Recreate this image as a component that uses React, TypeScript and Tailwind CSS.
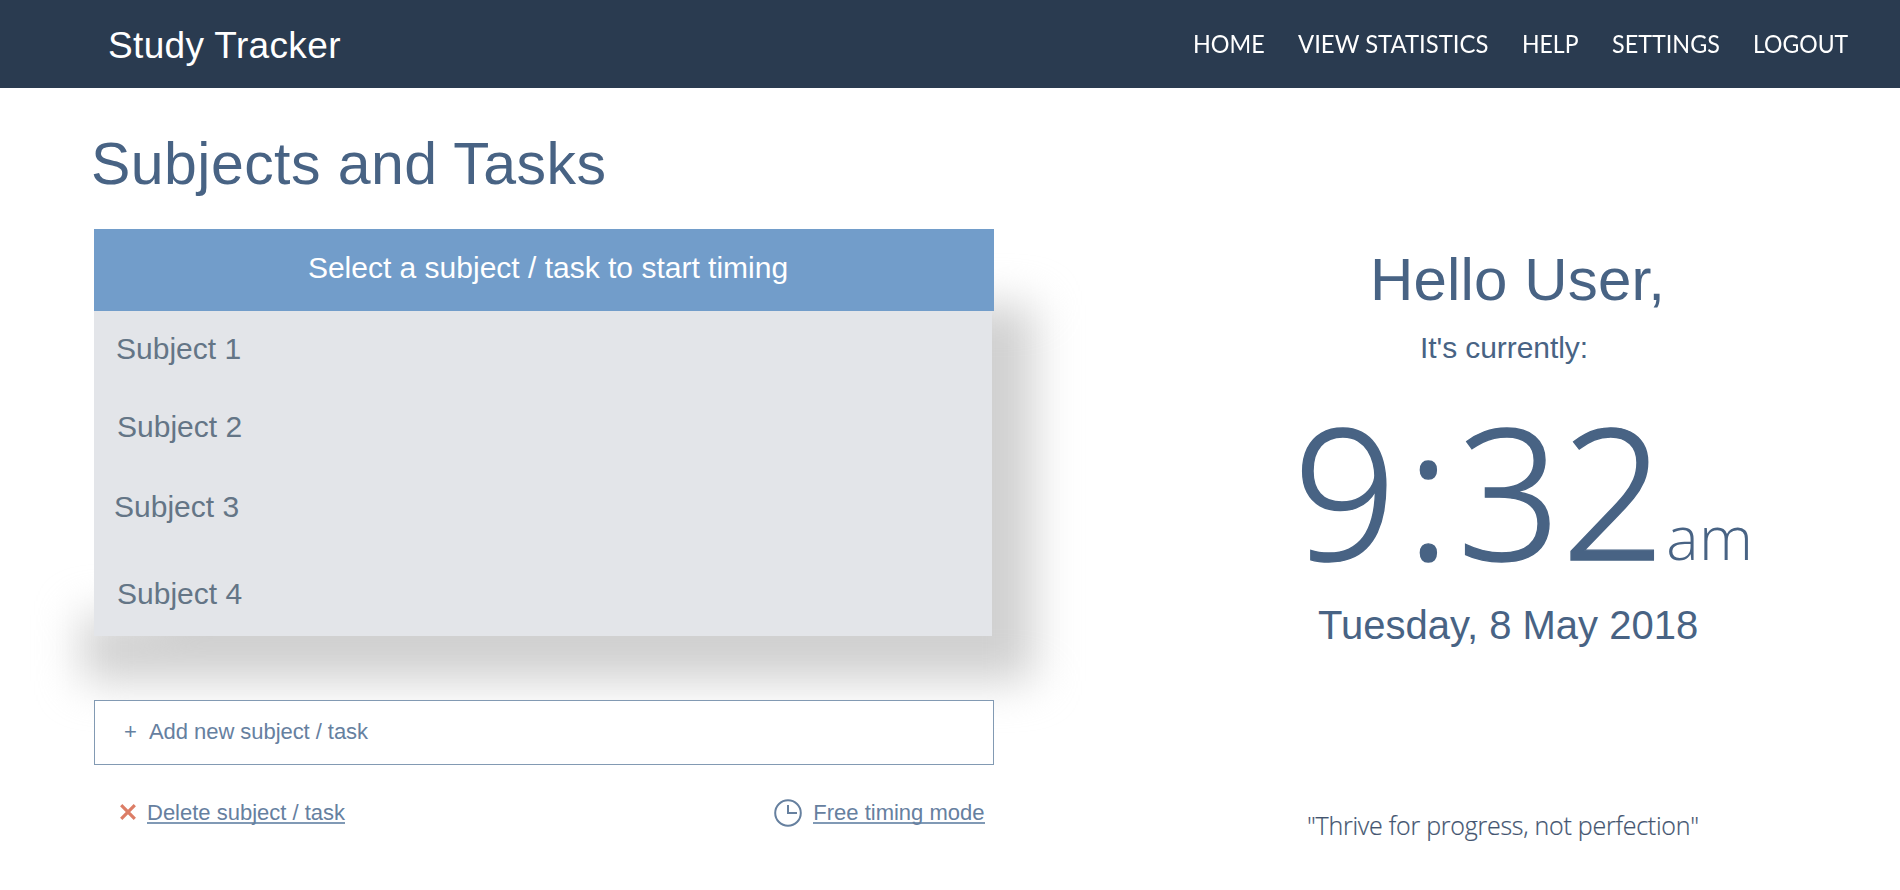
import type { ReactNode } from "react";

type Item = { label: string; className: string; textClassName?: string };

const NAV: Item[] = [
  { label: "HOME", className: "w-[105px]", textClassName: "scale-x-[0.935]" },
  { label: "VIEW STATISTICS", className: "w-[223.5px]", textClassName: "scale-x-[0.955]" },
  { label: "HELP", className: "w-[90px]", textClassName: "scale-x-[0.92]" },
  { label: "SETTINGS", className: "w-[141.5px]", textClassName: "scale-x-[0.935]" },
  { label: "LOGOUT", className: "w-[95px]", textClassName: "scale-x-[0.92]" },
];

const SUBJECTS: Item[] = [
  { label: "Subject 1", className: "h-[75px] pl-[22px]" },
  { label: "Subject 2", className: "h-[81px] pl-[23px]" },
  { label: "Subject 3", className: "h-[78px] pl-[20px]" },
  { label: "Subject 4", className: "h-[91px] pl-[23px] pt-1.5" },
];

function Header() {
  return (
    <header className="flex h-[88px] items-center justify-between bg-[#2a3b50] text-white">
      <div className="pt-[3px] pl-[108px] text-[37px] tracking-[0.35px]">Study Tracker</div>
      <nav className="flex pr-[52px] pb-px font-['Lato',sans-serif] text-[25px] whitespace-nowrap">
        {NAV.map((item) => (
          <a key={item.label} className={item.className}>
            <span className={`inline-block origin-left ${item.textClassName}`}>{item.label}</span>
          </a>
        ))}
      </nav>
    </header>
  );
}

function PanelShadow() {
  return (
    <div className="absolute inset-0 blur-[22px]">
      <div className="absolute top-[76px] -left-[12px] h-[376px] w-[952px] bg-[#d0d0d0] [clip-path:polygon(80px_0,100%_0,100%_100%,0_100%,0_310px,80px_310px)]" />
    </div>
  );
}

function SubjectPanel() {
  return (
    <section className="relative mt-[33px] h-[407px] w-[900px]">
      <PanelShadow />
      <div className="relative flex h-[82px] items-center justify-center bg-[#729dca] pb-1.5 pl-2 text-[30px] text-white">
        Select a subject / task to start timing
      </div>
      <ul className="relative mr-[2px] h-[325px] bg-[#e3e5e9] text-[30px] text-[#647586]">
        {SUBJECTS.map((s) => (
          <li key={s.label} className={`flex items-center ${s.className}`}>
            {s.label}
          </li>
        ))}
      </ul>
    </section>
  );
}

function ActionLink({ children }: { children: ReactNode }) {
  return <a className="border-b-2 border-[#8099b5] pt-px leading-[18px]">{children}</a>;
}

function Actions() {
  return (
    <>
      <div className="relative mt-16 flex h-[65px] w-[900px] items-center border-[1.5px] border-[#829ab3] bg-white pb-[3px] pl-[29px] text-[22px] tracking-[-0.05px] text-[#66809f]">
        <span className="w-[25px]">+</span>
        <span>Add new subject / task</span>
      </div>
      <div className="mt-8 flex h-8 w-[900px] items-center text-[22px] text-[#66809f]">
        <svg className="mb-0.5 ml-[26px] h-4 w-4" viewBox="0 0 16 16" fill="none" stroke="#dc7d66" strokeWidth="3.2">
          <path d="M1.2 1.2 14.8 14.8M14.8 1.2 1.2 14.8" />
        </svg>
        <div className="ml-[11px] flex">
          <ActionLink>Delete subject / task</ActionLink>
        </div>
        <svg className="ml-auto h-7 w-7" viewBox="0 0 28 28" fill="none" stroke="#66809f" strokeWidth="2">
          <circle cx="14" cy="14" r="12.8" />
          <path d="M14 6v8h9" />
        </svg>
        <div className="mr-[9.5px] ml-[11px] flex">
          <ActionLink>Free timing mode</ActionLink>
        </div>
      </div>
    </>
  );
}

function Greeting() {
  return (
    <aside className="w-[600px] pt-[154px] text-[#486384]">
      <h2 className="pl-[120px] text-[60px] leading-[76px] tracking-[0.15px]">Hello User,</h2>
      <p className="mt-[12px] pl-[170px] text-[30px] leading-9 tracking-[-0.08px]">It's currently:</p>
      <div className="mt-[59px] flex items-baseline pl-[43px] leading-[128px]">
        <div className="flex font-['Noto_Sans',sans-serif] text-[182px] font-light [-webkit-text-stroke:1.4px_#486384]">
          <span>9</span>
          <span className="mr-[7px] ml-[9px]">:</span>
          <span>32</span>
        </div>
        <span className="ml-px font-['Open_Sans',sans-serif] text-[61px] font-light tracking-[0.5px]">am</span>
      </div>
      <p className="pl-[68px] text-[40px] leading-[48px]">Tuesday, 8 May 2018</p>
      <p className="mt-[158px] pl-[57px] font-['Open_Sans',sans-serif] text-[25px] leading-[36px] font-light tracking-[-0.25px] text-[#43546f] [-webkit-text-stroke:0.2px_#43546f]">
        "Thrive for progress, not perfection"
      </p>
    </aside>
  );
}

export default function App() {
  return (
    <div className="h-[890px] w-[1900px] overflow-hidden bg-white font-['Liberation_Sans',Arial,sans-serif]">
      <Header />
      <main className="flex">
        <div className="w-[1250px] pl-[94px]">
          <h1 className="-ml-[3px] pt-[44px] text-[59px] leading-[64px] tracking-[0.45px] text-[#486384]">
            Subjects and Tasks
          </h1>
          <SubjectPanel />
          <Actions />
        </div>
        <Greeting />
      </main>
    </div>
  );
}
